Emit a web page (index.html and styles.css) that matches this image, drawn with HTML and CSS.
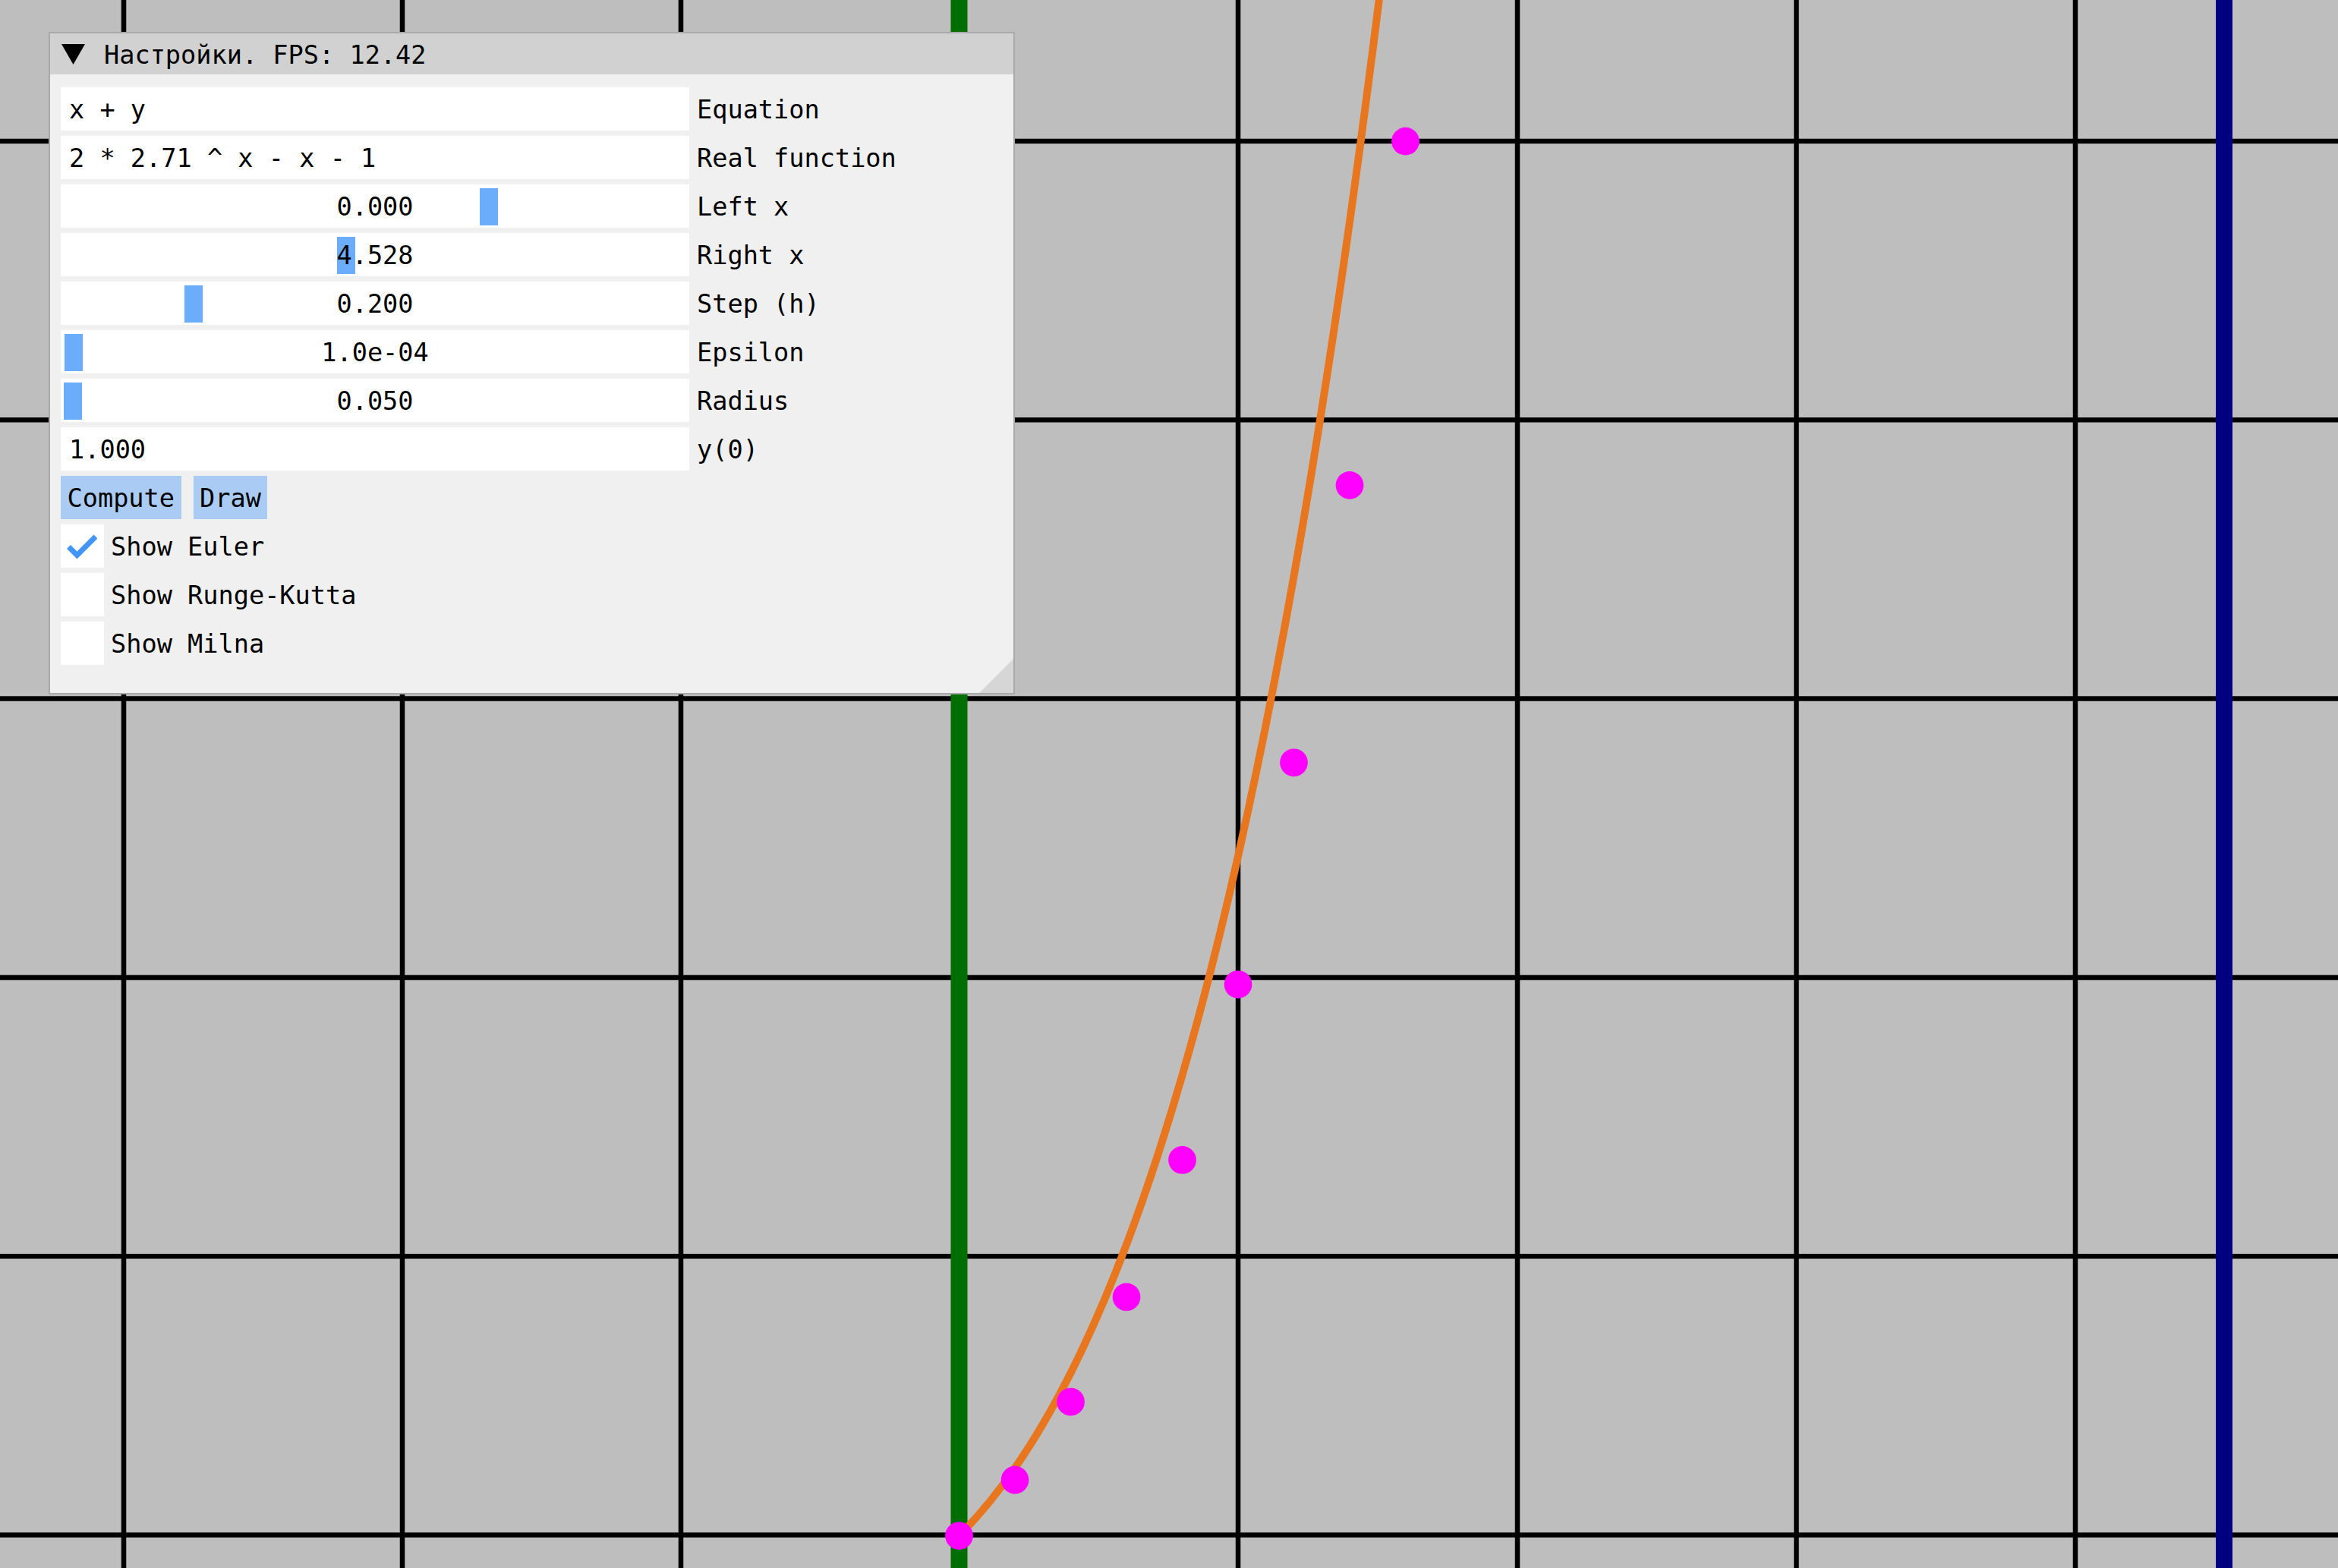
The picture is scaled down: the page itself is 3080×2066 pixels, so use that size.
FILE: index.html
```html
<!DOCTYPE html>
<html lang="ru">
<head>
<meta charset="utf-8">
<title>ODE solver</title>
<link rel="stylesheet" href="styles.css">
</head>
<body>
<div class="viewport">
  <svg class="plot" width="3080" height="2066" viewBox="0 0 3080 2066">
    <rect class="plot-bg" width="3080" height="2066"/>
    <g class="grid">
      <line x1="163" y1="0" x2="163" y2="2066"/>
      <line x1="530" y1="0" x2="530" y2="2066"/>
      <line x1="897" y1="0" x2="897" y2="2066"/>
      <line x1="1263.5" y1="0" x2="1263.5" y2="2066"/>
      <line x1="1631" y1="0" x2="1631" y2="2066"/>
      <line x1="1999" y1="0" x2="1999" y2="2066"/>
      <line x1="2366.5" y1="0" x2="2366.5" y2="2066"/>
      <line x1="2734" y1="0" x2="2734" y2="2066"/>
      <line x1="0" y1="186" x2="3080" y2="186"/>
      <line x1="0" y1="553.3" x2="3080" y2="553.3"/>
      <line x1="0" y1="920.6" x2="3080" y2="920.6"/>
      <line x1="0" y1="1287.9" x2="3080" y2="1287.9"/>
      <line x1="0" y1="1655.2" x2="3080" y2="1655.2"/>
      <line x1="0" y1="2022.5" x2="3080" y2="2022.5"/>
    </g>
    <line class="bound-left" x1="1263.5" y1="0" x2="1263.5" y2="2066"/>
    <line class="bound-right" x1="2930" y1="0" x2="2930" y2="2066"/>
    <g transform="translate(1263.5 2391) scale(367.5 -367.5)">
      <path class="curve" d="M0 1 C0.066667 1.066667 0.133333 1.146619 0.2 1.242806 C0.266667 1.338993 0.333333 1.451406 0.4 1.583649 C0.466667 1.715892 0.533333 1.867955 0.6 2.044238 C0.666667 2.220521 0.733333 2.421010 0.8 2.651082 C0.866667 2.881154 0.933333 3.140793 1.0 3.436564 C1.066667 3.732335 1.133333 4.064218 1.2 4.440234 C1.266667 4.816250 1.333333 5.236373 1.4 5.710400 C1.466667 6.184427 1.533333 6.712326 1.6 7.306064"/>
      <g class="euler">
        <circle cx="0" cy="1" r="0.05"/>
        <circle cx="0.2" cy="1.2" r="0.05"/>
        <circle cx="0.4" cy="1.48" r="0.05"/>
        <circle cx="0.6" cy="1.856" r="0.05"/>
        <circle cx="0.8" cy="2.3472" r="0.05"/>
        <circle cx="1.0" cy="2.97664" r="0.05"/>
        <circle cx="1.2" cy="3.771968" r="0.05"/>
        <circle cx="1.4" cy="4.7663616" r="0.05"/>
        <circle cx="1.6" cy="5.99963392" r="0.05"/>
      </g>
    </g>
  </svg>

  <section class="panel">
    <header class="titlebar">
      <svg class="collapse" width="31" height="27" viewBox="0 0 31 27"><polygon points="0,0 31,0 15.5,27"/></svg>
      <span class="title">Настройки. FPS: 12.42</span>
    </header>
    <div class="content">
      <div class="row">
        <div class="field text">x + y</div>
        <span class="label">Equation</span>
      </div>
      <div class="row">
        <div class="field text">2 * 2.71 ^ x - x - 1</div>
        <span class="label">Real function</span>
      </div>
      <div class="row">
        <div class="field slider"><span class="grab" style="left:552px"></span><span class="value">0.000</span></div>
        <span class="label">Left x</span>
      </div>
      <div class="row">
        <div class="field slider"><span class="grab" style="left:364px"></span><span class="value">4.528</span></div>
        <span class="label">Right x</span>
      </div>
      <div class="row">
        <div class="field slider"><span class="grab" style="left:163px"></span><span class="value">0.200</span></div>
        <span class="label">Step (h)</span>
      </div>
      <div class="row">
        <div class="field slider"><span class="grab" style="left:5px"></span><span class="value">1.0e-04</span></div>
        <span class="label">Epsilon</span>
      </div>
      <div class="row">
        <div class="field slider"><span class="grab" style="left:4px"></span><span class="value">0.050</span></div>
        <span class="label">Radius</span>
      </div>
      <div class="row">
        <div class="field text">1.000</div>
        <span class="label">y(0)</span>
      </div>
      <div class="row buttons">
        <button class="btn" type="button">Compute</button>
        <button class="btn" type="button">Draw</button>
      </div>
      <label class="row check">
        <span class="box"><svg width="57" height="57" viewBox="0 0 57 57"><polyline class="tick" points="10.5,29.5 21.5,40.5 46,16"/></svg></span>
        <span class="check-label">Show Euler</span>
      </label>
      <label class="row check">
        <span class="box"></span>
        <span class="check-label">Show Runge-Kutta</span>
      </label>
      <label class="row check">
        <span class="box"></span>
        <span class="check-label">Show Milna</span>
      </label>
    </div>
    <span class="resize-grip"></span>
  </section>
</div>
</body>
</html>
```

FILE: styles.css
```css
html, body {
  margin: 0;
  padding: 0;
}

body {
  width: 3080px;
  height: 2066px;
  overflow: hidden;
  background: #bebebe;
  font-family: "DejaVu Sans Mono", "Liberation Mono", monospace;
  font-size: 33.6px;
  color: #000;
}

.viewport {
  position: relative;
  width: 3080px;
  height: 2066px;
}

.plot {
  position: absolute;
  left: 0;
  top: 0;
  display: block;
}

.plot-bg {
  fill: #bebebe;
}

.grid line {
  stroke: #000;
  stroke-width: 6.5;
}

.bound-left {
  stroke: #006e00;
  stroke-width: 22;
}

.bound-right {
  stroke: #000080;
  stroke-width: 22;
}

.curve {
  fill: none;
  stroke: #e8761e;
  stroke-width: 10;
  vector-effect: non-scaling-stroke;
}

.euler circle {
  fill: #ff00ff;
}

/* settings window */
.panel {
  position: absolute;
  left: 64px;
  top: 42px;
  width: 1273px;
  height: 873px;
  box-sizing: border-box;
  border: 2px solid #a9a9a9;
  background: #f0f0f0;
}

.titlebar {
  height: 54px;
  background: #d1d1d1;
  display: flex;
  align-items: center;
  padding-left: 15px;
  gap: 25px;
}

.collapse {
  display: block;
  flex: none;
}

.collapse polygon {
  fill: #000;
}

.title {
  white-space: pre;
  line-height: 1;
  padding-top: 3px;
}

.content {
  padding: 17px 14px 0 14px;
  display: flex;
  flex-direction: column;
  gap: 7px;
}

.row {
  display: flex;
  align-items: center;
  height: 57px;
}

.field {
  position: relative;
  width: 828px;
  height: 57px;
  background: #fff;
  display: flex;
  align-items: center;
  box-sizing: border-box;
  white-space: pre;
  flex: none;
  padding-top: 2px;
}

.field.text {
  padding-left: 11px;
}

.field.slider {
  justify-content: center;
}

.grab {
  position: absolute;
  top: 5px;
  width: 24px;
  height: 49px;
  background: #6cadfb;
}

.value {
  position: relative;
}

.label {
  margin-left: 10px;
  white-space: pre;
  padding-top: 2px;
}

.buttons {
  gap: 16px;
}

.btn {
  height: 57px;
  padding: 2px 8.5px 0;
  margin: 0;
  border: none;
  background: #aaccf4;
  font: inherit;
  color: #000;
  white-space: pre;
}

.check {
  gap: 9px;
}

.box {
  width: 57px;
  height: 57px;
  background: #fff;
  flex: none;
  display: block;
}

.box svg {
  display: block;
}

.tick {
  fill: none;
  stroke: #4296fa;
  stroke-width: 7;
  stroke-linejoin: miter;
}

.check-label {
  white-space: pre;
  padding-top: 2px;
}

.resize-grip {
  position: absolute;
  right: 0;
  bottom: 0;
  width: 45px;
  height: 45px;
  background: #d6d6d6;
  clip-path: polygon(100% 0, 100% 100%, 0 100%);
}
```
